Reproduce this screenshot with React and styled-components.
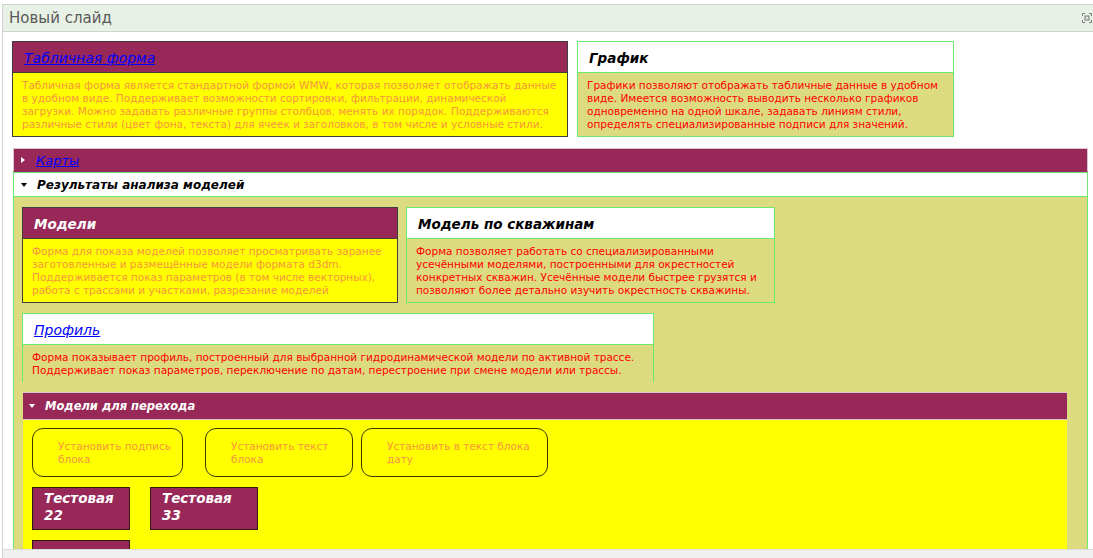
import styled, { createGlobalStyle, css } from "styled-components";

const GlobalStyle = createGlobalStyle`
  html, body {
    margin: 0;
    padding: 0;
    background: #ffffff;
    font-family: "DejaVu Sans", Verdana, sans-serif;
  }
`;

const MAROON = "#982858";
const YELLOW = "#ffff00";
const KHAKI = "#dcdb80";
const GREEN = "#6ee86e";

const Page = styled.div`
  width: 1093px;
  height: 558px;
  box-sizing: border-box;
  padding-top: 4px;
  display: flex;
  flex-direction: column;
  overflow: hidden;
`;

const Widget = styled.div`
  flex: 1;
  min-height: 0;
  margin-left: 2px;
  border-top: 1px solid #d2d2d2;
  border-left: 1px solid #d2d2d2;
  display: flex;
  flex-direction: column;
`;

const TitleBar = styled.div`
  height: 26px;
  background: #e8f1e5;
  border-bottom: 1px solid #d2d2d2;
  display: flex;
  align-items: center;
  justify-content: space-between;
  padding: 0 1px 0 6px;
`;

const SlideTitle = styled.span`
  font-size: 15px;
  color: #5a5a5a;
`;

const MaxIcon = () => (
  <svg width="10" height="10" viewBox="0 0 10 10">
    <path d="M0.5 3V0.5H3M7 0.5H9.5V3M9.5 7V9.5H7M3 9.5H0.5V7" fill="none" stroke="#7a7a7a" />
    <rect x="2.5" y="2.5" width="5" height="5" fill="#7a7a7a" />
    <rect x="3.5" y="3.5" width="3" height="3" fill="#e0e0e0" />
  </svg>
);

const Content = styled.div`
  flex: 1;
  min-height: 0;
  padding: 9px 5px 0 9px;
  display: flex;
  flex-direction: column;
`;

const Row = styled.div`
  display: flex;
  gap: ${(p) => p.$gap || 9}px;
  margin-bottom: ${(p) => p.$mb || 0}px;
`;

const Card = styled.div`
  width: ${(p) => p.$w}px;
  box-sizing: border-box;
  border: 1px solid ${(p) => (p.$dark ? "#3f3f3f" : GREEN)};
  ${(p) => p.$open && css`border-bottom: none;`}
`;

const CardHeader = styled.div`
  height: 31px;
  box-sizing: border-box;
  border-bottom: 1px solid ${(p) => (p.$dark ? "#3f3f3f" : GREEN)};
  background: ${(p) => (p.$dark ? MAROON : "#ffffff")};
  display: flex;
  align-items: center;
  padding: 1px 0 0 11px;
`;

const CardTitle = styled.span`
  font-size: 13.5px;
  font-weight: bold;
  font-style: italic;
  color: ${(p) => (p.$dark ? "#ffffff" : "#000000")};
`;

const CardLink = styled.a`
  font-size: 14px;
  font-style: italic;
  color: #0000ff;
  text-decoration: underline;
`;

const CardBody = styled.div`
  background: ${(p) => (p.$dark ? YELLOW : KHAKI)};
  color: ${(p) => (p.$dark ? "#f8963f" : "#ff0000")};
  font-size: 10.5px;
  line-height: 13px;
  padding: 6px 9px 5px;
  white-space: nowrap;
`;

const AccHeader = styled.div`
  height: ${(p) => p.$h}px;
  box-sizing: border-box;
  display: flex;
  align-items: center;
  gap: ${(p) => p.$gap || 10}px;
  padding-left: 7px;
  background: ${(p) => (p.$light ? "#ffffff" : MAROON)};
  border: 1px solid ${(p) => (p.$light ? GREEN : "#d9c4cc")};
  ${(p) => !p.$light && css`border-bottom-color: ${MAROON};`}
`;

const Arrow = styled.span`
  width: 0;
  height: 0;
  ${(p) =>
    p.$down
      ? css`
          border-left: 3.5px solid transparent;
          border-right: 3.5px solid transparent;
          border-top: 4px solid ${p.$color};
        `
      : css`
          border-top: 3.5px solid transparent;
          border-bottom: 3.5px solid transparent;
          border-left: 4px solid ${p.$color};
        `}
`;

const AccLink = styled.a`
  font-size: 13px;
  font-style: italic;
  color: #0000ff;
  text-decoration: underline;
`;

const AccTitle = styled.span`
  font-size: ${(p) => p.$size || 12}px;
  font-weight: bold;
  font-style: italic;
  color: ${(p) => (p.$light ? "#000000" : "#ffffff")};
`;

const Accordion = styled.div`
  margin-left: 1px;
  display: flex;
  flex-direction: column;
  flex: ${(p) => (p.$grow ? 1 : "none")};
  min-height: 0;
`;

const SectionBody = styled.div`
  flex: 1;
  min-height: 0;
  background: ${KHAKI};
  border-left: 1px solid ${GREEN};
  border-right: 1px solid ${GREEN};
  padding: 10px 0 0 8px;
  display: flex;
  flex-direction: column;
`;

const Panel = styled.div`
  width: 1044px;
  margin-left: 1px;
  flex: 1;
  display: flex;
  flex-direction: column;
`;

const PanelHeader = styled.div`
  height: 28px;
  box-sizing: border-box;
  background: ${MAROON};
  border-top: 1px solid #d9c4cc;
  border-bottom: 1px solid #d9c4cc;
  display: flex;
  align-items: center;
  gap: 10px;
  padding-left: 6px;
`;

const PanelBody = styled.div`
  flex: 1;
  background: ${YELLOW};
  padding: 8px 9px 0;
`;

const ButtonRow = styled.div`
  display: flex;
`;

const ActionButton = styled.button`
  width: ${(p) => p.$w}px;
  height: 49px;
  margin-right: ${(p) => p.$mr}px;
  box-sizing: border-box;
  border: 1px solid #3a3a00;
  border-radius: 11px;
  background: ${YELLOW};
  color: #f8963f;
  font-family: "DejaVu Sans", Verdana, sans-serif;
  font-size: 10.5px;
  line-height: 13px;
  text-align: left;
  padding: 0 0 0 25px;
`;

const TileGrid = styled.div`
  display: grid;
  grid-template-columns: repeat(2, max-content);
  column-gap: 20px;
  row-gap: 10px;
  margin-top: 10px;
`;

const Tile = styled.div`
  width: ${(p) => p.$w}px;
  height: 43px;
  box-sizing: border-box;
  background: ${MAROON};
  border: 1px solid #2a1a10;
  padding: 2px 0 0 11px;
  color: #ffffff;
  font-size: 13.5px;
  font-weight: bold;
  font-style: italic;
  line-height: 17px;
`;

const Footer = styled.div`
  height: 8px;
  background: #f0f0f0;
  border-top: 1px solid #dcdcdc;
`;

export default function App() {
  return (
    <>
      <GlobalStyle />
      <Page>
        <Widget>
          <TitleBar>
            <SlideTitle>Новый слайд</SlideTitle>
            <MaxIcon />
          </TitleBar>
          <Content>
            <Row $mb={11}>
              <Card $w={556} $dark>
                <CardHeader $dark>
                  <CardLink href="#">Табличная форма</CardLink>
                </CardHeader>
                <CardBody $dark>
                  Табличная форма является стандартной формой WMW, которая позволяет отображать данные
                  <br />
                  в удобном виде. Поддерживает возможности сортировки, фильтрации, динамической
                  <br />
                  загрузки. Можно задавать различные группы столбцов, менять их порядок. Поддерживаются
                  <br />
                  различные стили (цвет фона, текста) для ячеек и заголовков, в том числе и условные стили.
                </CardBody>
              </Card>
              <Card $w={377}>
                <CardHeader>
                  <CardTitle>График</CardTitle>
                </CardHeader>
                <CardBody>
                  Графики позволяют отображать табличные данные в удобном
                  <br />
                  виде. Имеется возможность выводить несколько графиков
                  <br />
                  одновременно на одной шкале, задавать линиям стили,
                  <br />
                  определять специализированные подписи для значений.
                </CardBody>
              </Card>
            </Row>

            <Accordion>
              <AccHeader $h={24} $gap={11}>
                <Arrow $color="#ffffff" />
                <AccLink href="#">Карты</AccLink>
              </AccHeader>
            </Accordion>

            <Accordion $grow>
              <AccHeader $h={25} $light>
                <Arrow $down $color="#000000" />
                <AccTitle $light>Результаты анализа моделей</AccTitle>
              </AccHeader>
              <SectionBody>
                <Row $gap={8} $mb={10}>
                  <Card $w={376} $dark>
                    <CardHeader $dark>
                      <CardTitle $dark>Модели</CardTitle>
                    </CardHeader>
                    <CardBody $dark>
                      Форма для показа моделей позволяет просматривать заранее
                      <br />
                      заготовленные и размещённые модели формата d3dm.
                      <br />
                      Поддерживается показ параметров (в том числе векторных),
                      <br />
                      работа с трассами и участками, разрезание моделей
                    </CardBody>
                  </Card>
                  <Card $w={369}>
                    <CardHeader>
                      <CardTitle>Модель по скважинам</CardTitle>
                    </CardHeader>
                    <CardBody>
                      Форма позволяет работать со специализированными
                      <br />
                      усечёнными моделями, построенными для окрестностей
                      <br />
                      конкретных скважин. Усечённые модели быстрее грузятся и
                      <br />
                      позволяют более детально изучить окрестность скважины.
                    </CardBody>
                  </Card>
                </Row>
                <Row $mb={10}>
                  <Card $w={632} $open>
                    <CardHeader>
                      <CardLink href="#">Профиль</CardLink>
                    </CardHeader>
                    <CardBody>
                      Форма показывает профиль, построенный для выбранной гидродинамической модели по активной трассе.
                      <br />
                      Поддерживает показ параметров, переключение по датам, перестроение при смене модели или трассы.
                    </CardBody>
                  </Card>
                </Row>
                <Panel>
                  <PanelHeader>
                    <Arrow $down $color="#ffffff" />
                    <AccTitle $size={11.5}>Модели для перехода</AccTitle>
                  </PanelHeader>
                  <PanelBody>
                    <ButtonRow>
                      <ActionButton $w={151} $mr={22}>
                        Установить подпись
                        <br />
                        блока
                      </ActionButton>
                      <ActionButton $w={148} $mr={8}>
                        Установить текст
                        <br />
                        блока
                      </ActionButton>
                      <ActionButton $w={187} $mr={0}>
                        Установить в текст блока
                        <br />
                        дату
                      </ActionButton>
                    </ButtonRow>
                    <TileGrid>
                      <Tile $w={98}>
                        Тестовая
                        <br />
                        22
                      </Tile>
                      <Tile $w={108}>
                        Тестовая
                        <br />
                        33
                      </Tile>
                      <Tile $w={98} />
                    </TileGrid>
                  </PanelBody>
                </Panel>
              </SectionBody>
            </Accordion>
          </Content>
          <Footer />
        </Widget>
      </Page>
    </>
  );
}
